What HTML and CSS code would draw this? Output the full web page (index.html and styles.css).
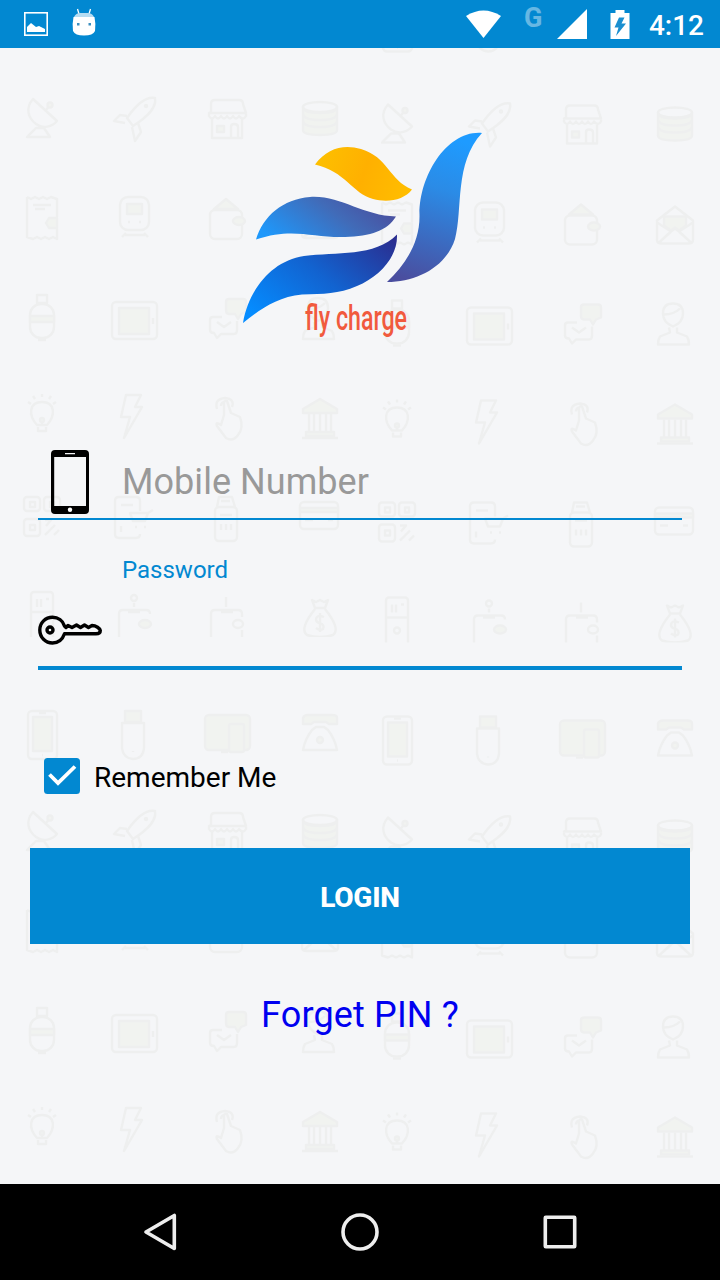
FILE: index.html
```html
<!DOCTYPE html>
<html lang="en">
<head>
    <meta charset="UTF-8">
    <meta name="viewport" content="width=device-width, initial-scale=1.0">
    <title>Login - Fly Charge</title>
    <link rel="stylesheet" href="styles.css">
</head>
<body>
    <header class="status-bar">
        <svg class="icon-image" width="24" height="24" viewBox="0 0 24 24">
            <rect x="0.8" y="0.8" width="22.4" height="22.4" fill="none" stroke="#fff" stroke-width="1.6"/>
            <path d="M3 20V15L7 11L12 15L15 14L21 17V20Z" fill="#fff"/>
        </svg>
        <svg class="icon-android" width="24" height="28" viewBox="0 0 24 28">
            <path d="M5.5 1L7 6M18.500 1L17 6" stroke="#fff" stroke-width="1.3"/>
            <path d="M2 9Q4 5 8 5H16Q20 5 22 9Z" fill="#b5dcf2"/>
            <path d="M1.500 9H22.500Q24 16 23 23Q21 27.500 12 27.500Q3 27.500 1 23Q0 16 1.500 9Z" fill="#fff"/>
            <path d="M5 15h2.500v2.500h-2.500zM16.500 15h2.500v2.500h-2.500z" fill="#3d8fc0"/>
        </svg>
        <div class="status-right">
            <svg class="icon-wifi" width="35" height="28" viewBox="0 0 35 28">
                <path d="M0 6Q17.500 -5 35 6L17.500 28Z" fill="#fff"/>
            </svg>
            <span class="network">G</span>
            <svg class="icon-signal" width="30" height="30" viewBox="0 0 30 30">
                <path d="M0 30L30 0V30Z" fill="#fff"/>
            </svg>
            <svg class="icon-battery" width="20" height="29" viewBox="0 0 20 29">
                <path d="M0.500 3H5.500V0H14.500V3H19.500V29H0.500Z" fill="#fff"/>
                <path d="M9 7.500L4.500 17.500H8.500L6 26L16 13.500H11.500L14.500 7.500Z" fill="#1a8fd0"/>
            </svg>
            <span class="clock">4:12</span>
        </div>
    </header>

    <main class="login">
        <svg class="backdrop" width="720" height="1136" viewBox="0 48 720 1136">
            <defs>
                <clipPath id="rowClip"><rect x="0" y="580" width="360" height="57"/></clipPath>
                <g id="motifs">
                    <!-- satellite dish -->
                    <path d="M33 99C25 108 28 118 36 124C43 129 52 127 57 121ZM46 110L50 105M27 137L36 128H44L50 137Z"/>
                    <circle class="tint" cx="50" cy="105" r="2.500"/>
                    <!-- rocket -->
                    <path d="M155 98C145 96 136 105 127 118L133 126C147 117 157 108 155 98ZM127 116L120 115L114 121L125 123M132 127L135 141L141 132L138 123"/>
                    <circle cx="146" cy="106" r="1"/>
                    <!-- store -->
                    <path d="M211 112V104Q211 100 215 100H239Q243 100 243 104L246 113H209ZM212 119V138H242V119M231 138V127Q231 124 234 124Q238 124 238 127V138"/>
                    <path d="M209 114V116Q212 121 215 116Q218 121 221 116Q224 121 227 116Q230 121 233 116Q236 121 239 116Q243 121 246 116V114"/>
                    <rect class="tint" x="217" y="126" width="7" height="6"/>
                    <!-- coins -->
                    <ellipse cx="320" cy="107" rx="17" ry="5"/>
                    <path class="tint" d="M303 107V130Q303 135 320 135Q337 135 337 130V107Q337 113 320 113Q303 113 303 107Z"/>
                    <path d="M303 115Q305 120 320 120Q335 120 337 115M303 122Q305 127 320 127Q335 127 337 122"/>
                    <!-- receipt -->
                    <path d="M27 197L31 199L35 197L39 199L43 197L47 199L51 197L57 199V217M57 229V239L53 237L49 239L45 237L41 239L37 237L33 239L27 237V197M33 205H51M35 209H45"/>
                    <path class="tint" d="M57 218H49L46 223L49 228H57Z"/>
                    <!-- train -->
                    <rect x="120" y="197" width="29" height="33" rx="8"/>
                    <rect class="tint" x="127" y="204" width="15" height="10"/>
                    <path d="M128 222H130M139 222H141M126 233L122 237M144 233L148 237M125 235H145"/>
                    <!-- wallet -->
                    <rect x="210" y="210" width="32" height="29" rx="5"/>
                    <path class="tint" d="M214 209L226 199L238 209Z"/>
                    <ellipse class="tint" cx="239" cy="221" rx="6" ry="4"/>
                    <!-- envelope -->
                    <path d="M302 215L320 201L338 215V234Q338 238 334 238H306Q302 238 302 234ZM302 217L316 226L303 238M338 217L324 226L337 238M316 226L320 223L324 226"/>
                    <path class="tint" d="M309 220V211H331V220L324 225L320 222L316 225Z"/>
                    <!-- bottle -->
                    <rect x="37" y="295" width="10" height="8"/>
                    <rect x="30" y="304" width="24" height="34" rx="11"/>
                    <rect class="tint" x="30" y="316" width="24" height="6"/>
                    <path d="M38 340H46"/>
                    <!-- tablet -->
                    <rect x="112" y="302" width="45" height="37" rx="4"/>
                    <rect class="tint" x="119" y="308" width="30" height="26"/>
                    <path d="M153 318V324"/>
                    <!-- chat -->
                    <path class="tint" d="M229 299H243Q246 299 246 302V312L241 314L238 319L235 314H229Q226 314 226 310V302Q226 299 229 299Z"/>
                    <path d="M222 317H213Q210 317 210 320V330Q210 333 214 333L217 338L221 334H234Q237 334 237 330V321M217 322L224 327L231 322"/>
                    <!-- person -->
                    <path d="M308 308Q308 298 318 298Q328 298 328 308Q328 317 318 321Q308 317 308 308ZM309 309Q319 309 325 303M314 322L315 327L305 331Q303 334 303 339H334Q334 334 332 331L322 327V322"/>
                    <!-- bulb -->
                    <path d="M37 425C28 415 29 402 42 402C55 402 56 415 47 425ZM38 427V431H46V427M42 394V397M28 402L31 404M56 402L53 404M33 396L35 399M51 396L49 399M42 418V425"/>
                    <circle class="tint" cx="42" cy="420" r="2"/>
                    <!-- bolt -->
                    <path d="M126 395H141L135 407H142L124 438L130 417H121Z"/>
                    <!-- hand -->
                    <path d="M224 415V404Q224 400 227 401L231 413L240 417Q244 428 238 435Q233 442 226 438L217 426Q215 421 221 425Z"/>
                    <path d="M217 409Q214 399 225 398Q235 399 232 407M221 406Q221 403 224 402"/>
                    <!-- bank -->
                    <path class="tint" d="M320 399L337 409V413H303V409ZM306 432H334V436H306Z"/>
                    <path d="M309 414V432M314 414V432M320 414V432M326 414V432M331 414V432M302 438H338"/>
                    <!-- qr code -->
                    <rect x="24" y="497" width="16" height="14" rx="3"/>
                    <rect x="44" y="497" width="16" height="14" rx="3"/>
                    <rect x="24" y="519" width="16" height="17" rx="3"/>
                    <path d="M30 502H35V507H30ZM50 502H54V507H50ZM30 525H35V530H30ZM45 520H51L46 526M55 525L45 535M59 530L54 535"/>
                    <!-- phone with cart -->
                    <path d="M140 511V501Q140 497 136 497H119Q115 497 115 501V534Q115 538 119 538H136Q140 538 140 534M121 505H133M153 510L148 513L145 521H133L130 513H148M135 527H137M144 527H146M121 526V532"/>
                    <!-- card terminal -->
                    <path d="M217 507L219 497H232L235 507M221 501H230"/>
                    <rect x="215" y="507" width="22" height="34" rx="4"/>
                    <path d="M220 515H232M221 524V530M226 524V530M231 524V530"/>
                    <!-- credit card -->
                    <rect x="300" y="502" width="38" height="27" rx="4"/>
                    <path class="tint" d="M300 508H338V512H300Z"/>
                    <path d="M305 520H313M328 520H333"/>
                    <g clip-path="url(#rowClip)">
                        <!-- server -->
                        <rect x="31" y="592" width="22" height="54" rx="3"/>
                        <path d="M31 612H53M37 599V607M41 599V607M46 599H49"/>
                        <circle cx="42" cy="625" r="3"/>
                        <!-- wallets with coins -->
                        <circle cx="134" cy="598" r="3"/>
                        <path d="M119 640V614Q119 610 123 610H146Q150 610 150 614M128 612H140M134 603V607"/>
                        <ellipse class="tint" cx="145" cy="624" rx="6" ry="4"/>
                        <path d="M211 640V614Q211 610 215 610H238Q242 610 242 614V617M242 630V640M221 612H233M226 597V607"/>
                        <ellipse cx="238" cy="624" rx="5" ry="4"/>
                        <!-- money bag -->
                        <path d="M312 600L316 602L320 600L324 602L328 600L325 608H315ZM315 609Q299 629 307 635Q320 639 333 635Q341 629 325 609"/>
                        <path d="M324 617Q316 614 316 620Q317 623 320 623Q325 625 323 629Q320 631 316 628M320 613V632"/>
                    </g>
                    <!-- smartphone -->
                    <rect x="28" y="711" width="29" height="48" rx="4"/>
                    <rect class="tint" x="33" y="717" width="19" height="34"/>
                    <path d="M39 713H46M42 755H43"/>
                    <!-- usb stick -->
                    <rect class="tint" x="125" y="711" width="16" height="11"/>
                    <path d="M122 723H144V748Q143 759 133 759Q123 758 122 748ZM133 751V752"/>
                    <!-- monitor -->
                    <rect class="tint" x="205" y="715" width="45" height="35" rx="4"/>
                    <rect class="tint" x="229" y="724" width="15" height="28" rx="2"/>
                    <path d="M221 752H228"/>
                    <!-- telephone -->
                    <path class="tint" d="M303 718Q304 715 308 715H332Q337 715 337 718V724H329L326 722H314L311 724H303Z"/>
                    <path d="M312 730L316 727H324L328 730Q335 739 337 750H303Q305 739 312 730Z"/>
                    <circle class="tint" cx="320" cy="740" r="3"/>
                </g>
            </defs>
            <use href="#motifs"/>
            <use href="#motifs" x="355" y="5.500"/>
            <use href="#motifs" y="713"/>
            <use href="#motifs" x="355" y="718.500"/>
            <use href="#motifs" x="355" y="-707.500"/>
        </svg>

        <svg class="logo" width="250" height="220" viewBox="238 125 250 220">
            <defs>
                <linearGradient id="gold" x1="0" y1="0.400" x2="1" y2="0.600">
                    <stop offset="0" stop-color="#fdbf00"/>
                    <stop offset="0.500" stop-color="#ffb000"/>
                    <stop offset="1" stop-color="#ffbd00"/>
                </linearGradient>
                <linearGradient id="tall" x1="0.500" y1="0" x2="0.300" y2="1">
                    <stop offset="0" stop-color="#1e9bff"/>
                    <stop offset="0.350" stop-color="#2b8be6"/>
                    <stop offset="1" stop-color="#4a4e9f"/>
                </linearGradient>
                <linearGradient id="middle" x1="0" y1="0.700" x2="1" y2="0.300">
                    <stop offset="0" stop-color="#1e98fb"/>
                    <stop offset="0.600" stop-color="#416bb8"/>
                    <stop offset="1" stop-color="#4b4c9c"/>
                </linearGradient>
                <linearGradient id="lower" x1="0" y1="0.800" x2="1" y2="0.100">
                    <stop offset="0" stop-color="#058cff"/>
                    <stop offset="0.500" stop-color="#1263d0"/>
                    <stop offset="1" stop-color="#2a2f91"/>
                </linearGradient>
            </defs>
            <path fill="url(#gold)" d="M315 164.500C327 148 344 144 361 149C388 157 389 180 412 189.500C404 200 388 203 373 199C353 194 345 171 315 164.500Z"/>
            <path fill="url(#tall)" d="M482 133C447 130 419 176 419.500 215C420 242 406 264 387 282C417 282 446 267 455 239C463 210 454 163 482 133Z"/>
            <path fill="url(#middle)" d="M256 239.500C263 216 283 199 310 197C340 195 363 216 396 216.500C387 231 371 236 345 237C312 238 293 227 256 239.500Z"/>
            <path fill="url(#lower)" d="M243 323C248 292 270 261 304 256C336 252 375 257 397 234.500C398 257 379 277 357 286C338 294 324 294 302 294.500C276 297 258 311 243 323Z"/>
            <text class="logo-text" x="305" y="330" textLength="102" lengthAdjust="spacingAndGlyphs">fly charge</text>
        </svg>

        <form class="login-form">
            <div class="field">
                <svg class="field-icon" width="64" height="64" viewBox="0 0 64 64">
                    <path fill-rule="evenodd" d="M17 0H47Q51 0 51 4V60Q51 64 47 64H17Q13 64 13 60V4Q13 0 17 0ZM16.200 7V56H48V7ZM27 3V4.200H37V3Z"/>
                    <circle cx="32" cy="59.700" r="2.200" fill="#fff"/>
                </svg>
                <input class="field-input" type="tel" placeholder="Mobile Number">
            </div>
            <label class="field-label" for="password">Password</label>
            <div class="field focused">
                <svg class="field-icon" width="64" height="64" viewBox="0 0 64 64">
                    <g fill="none" stroke="#000" stroke-width="3.400" stroke-linejoin="round">
                        <path d="M26.500 28L28 29.500L30 27.500L34 29.500L38.500 27L42.500 29.500L46.500 27L50.500 29.500L54 27.500C58 27.500 62 30.500 62.300 32.500C62.300 35 60 35.800 58 35.800H26.500C24.500 41.500 20 45 14.500 45C7.500 45 1.800 39.500 1.800 32C1.800 24.700 7.500 19.200 14.500 19.200C20 19.200 25 22.500 26.500 28Z"/>
                        <circle cx="12" cy="32" r="3"/>
                    </g>
                </svg>
                <input class="field-input" id="password" type="password">
            </div>

            <div class="remember">
                <svg width="36" height="36" viewBox="0 0 36 36">
                    <rect width="36" height="36" rx="3.500" fill="#0288d1"/>
                    <path d="M5.500 16.500L14 25L31 8.500" fill="none" stroke="#fff" stroke-width="3.800"/>
                </svg>
                <span>Remember Me</span>
            </div>

            <button class="login-button" type="button">LOGIN</button>
        </form>
        <a class="forget" href="#">Forget PIN ?</a>
    </main>

    <nav class="nav-bar">
        <svg width="40" height="40" viewBox="0 0 40 40">
            <path d="M34.300 3.500V36.500L6 20Z"/>
        </svg>
        <svg width="40" height="40" viewBox="0 0 40 40">
            <circle cx="20" cy="20" r="17"/>
        </svg>
        <svg width="40" height="40" viewBox="0 0 40 40">
            <rect x="5.300" y="5.300" width="29.400" height="29.400" rx="0.500"/>
        </svg>
    </nav>
</body>
</html>
```

FILE: styles.css
```css
:root {
    --primary-color: #0288d1;
    --background-color: #f5f6f8;
    --hint-color: #999999;
    --link-color: #0000f0;
}

* {
    margin: 0;
    padding: 0;
    box-sizing: border-box;
}

body {
    display: flex;
    flex-direction: column;
    height: 1280px;
    font-family: Roboto, sans-serif;
    background-color: var(--background-color);
    overflow: hidden;
}

svg {
    display: block;
    flex-shrink: 0;
}

.status-bar {
    display: flex;
    align-items: center;
    height: 48px;
    padding: 0 16px 0 24px;
    background-color: var(--primary-color);
    color: white;
}

.icon-android {
    margin-left: 24px;
    margin-bottom: 4px;
}

.status-right {
    display: flex;
    align-items: center;
    margin-left: auto;
}

.network {
    width: 18px;
    margin: 0 15px 12px 23px;
    font-size: 27px;
    font-weight: bold;
    line-height: 28px;
    opacity: 0.4;
}

.icon-battery {
    margin: 0 19px 0 23px;
}

.clock {
    font-size: 28px;
    font-weight: 500;
    line-height: 32px;
    padding-top: 3px;
}

.login {
    position: relative;
    display: flex;
    flex-direction: column;
    align-items: center;
    height: 1136px;
    padding-top: 77px;
}

.backdrop {
    position: absolute;
    top: 0;
    left: 0;
    z-index: -1;
    fill: none;
    stroke: #eeefef;
    stroke-width: 2.4;
    stroke-linejoin: round;
}

.backdrop .tint {
    fill: #f1f3f0;
}

.logo {
    margin-left: 6px;
}

.logo-text {
    font-size: 35px;
    font-weight: 500;
    fill: #f15a3d;
}

.login-form {
    width: 660px;
    margin-top: 103px;
}

.field {
    display: flex;
    margin: 0 8px;
    height: 72px;
    border-bottom: 2px solid var(--primary-color);
}

.field-icon {
    margin-top: 2px;
}

.field-input {
    flex: 1;
    min-width: 0;
    height: 64px;
    padding: 4px 0 0 20px;
    border: none;
    outline: none;
    background: transparent;
    font-family: inherit;
    font-size: 36px;
    letter-spacing: 0.05px;
}

.field-input::placeholder {
    color: var(--hint-color);
}

.field-label {
    display: block;
    margin: 36px 0 0 92px;
    font-size: 24px;
    line-height: 28px;
    color: var(--primary-color);
}

.focused {
    height: 74px;
    margin-top: 12px;
    border-bottom-width: 4px;
}

.remember {
    display: flex;
    align-items: center;
    gap: 14px;
    margin: 88px 0 0 14px;
    height: 36px;
    font-size: 28px;
    color: black;
}

.remember span {
    padding-top: 3px;
}

.login-button {
    display: block;
    width: 100%;
    height: 96px;
    margin-top: 54px;
    padding-top: 2px;
    border: none;
    background-color: var(--primary-color);
    color: white;
    font-family: inherit;
    font-size: 28px;
    font-weight: 800;
    letter-spacing: -0.2px;
}

.forget {
    margin-top: 50px;
    font-size: 36px;
    line-height: 42px;
    letter-spacing: 0.15px;
    color: var(--link-color);
    text-decoration: none;
}

.nav-bar {
    display: flex;
    justify-content: center;
    align-items: center;
    gap: 160px;
    height: 96px;
    background-color: black;
}

.nav-bar svg {
    fill: none;
    stroke: #eeeeee;
    stroke-width: 3.6;
    stroke-linejoin: round;
}
```
